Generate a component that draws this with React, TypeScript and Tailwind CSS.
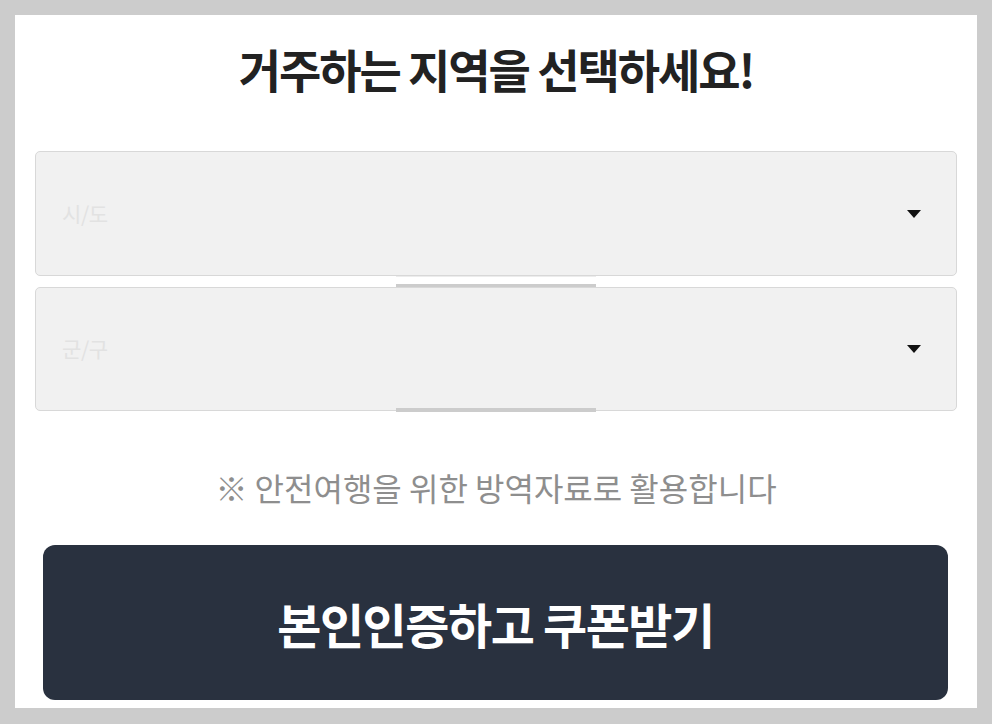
import React from "react";

function Arrow() {
  return (
    <svg width="14" height="8" viewBox="0 0 14 8" className="block">
      <path d="M0 0 L14 0 L7 8 Z" fill="#111" />
    </svg>
  );
}

function SelectBox({ label, h }: { label: string; h: string }) {
  return (
    <div
      className={`${h} w-full flex items-center justify-between rounded-[5px] border border-[#d8d8d8] bg-[#f1f1f1] pl-[26px] pr-[35px]`}
    >
      <span className="text-[21px] text-[#e2e2e2] tracking-[-0.02em]">{label}</span>
      <Arrow />
    </div>
  );
}

export default function App() {
  return (
    <div
      className="h-[724px] w-[992px] bg-[#cccccc] pt-[15px] px-[15px] pb-[16px]"
      style={{ fontFamily: '"Noto Sans CJK KR", "Noto Sans", sans-serif' }}
    >
      <div className="relative h-[693px] bg-white px-[20px] pb-[8px] flex flex-col">
        <div className="h-[106px] flex items-center justify-center">
          <h1 className="text-[46px] font-bold text-[#222] tracking-[-0.045em] leading-none">
            거주하는 지역을 선택하세요!
          </h1>
        </div>
        <div className="mt-[30px]">
          <SelectBox label="시/도" h="h-[125px]" />
        </div>
        <div className="mt-[11px]">
          <SelectBox label="군/구" h="h-[124px]" />
        </div>
        <div className="mt-[56px] h-[40px] flex items-center justify-center">
          <p className="text-[32px] text-[#8e8e8e] leading-none">
            ※ 안전여행을 위한 방역자료로 활용합니다
          </p>
        </div>
        <div className="mt-[38px] ml-[8px] mr-[9px] h-[155px] rounded-[12px] bg-[#29313f] flex items-center justify-center">
          <span className="text-[48px] font-bold text-white tracking-[-0.03em] leading-none">
            본인인증하고 쿠폰받기
          </span>
        </div>
        <div className="absolute left-[381px] top-[261px] w-[200px] flex flex-col pointer-events-none">
          <div className="h-[8px] bg-white border-t border-[#ececec]" />
          <div className="h-[3px] bg-[#cccccc]" />
          <div className="h-[121px]" />
          <div className="h-[4px] bg-[#cccccc]" />
        </div>
      </div>
    </div>
  );
}
